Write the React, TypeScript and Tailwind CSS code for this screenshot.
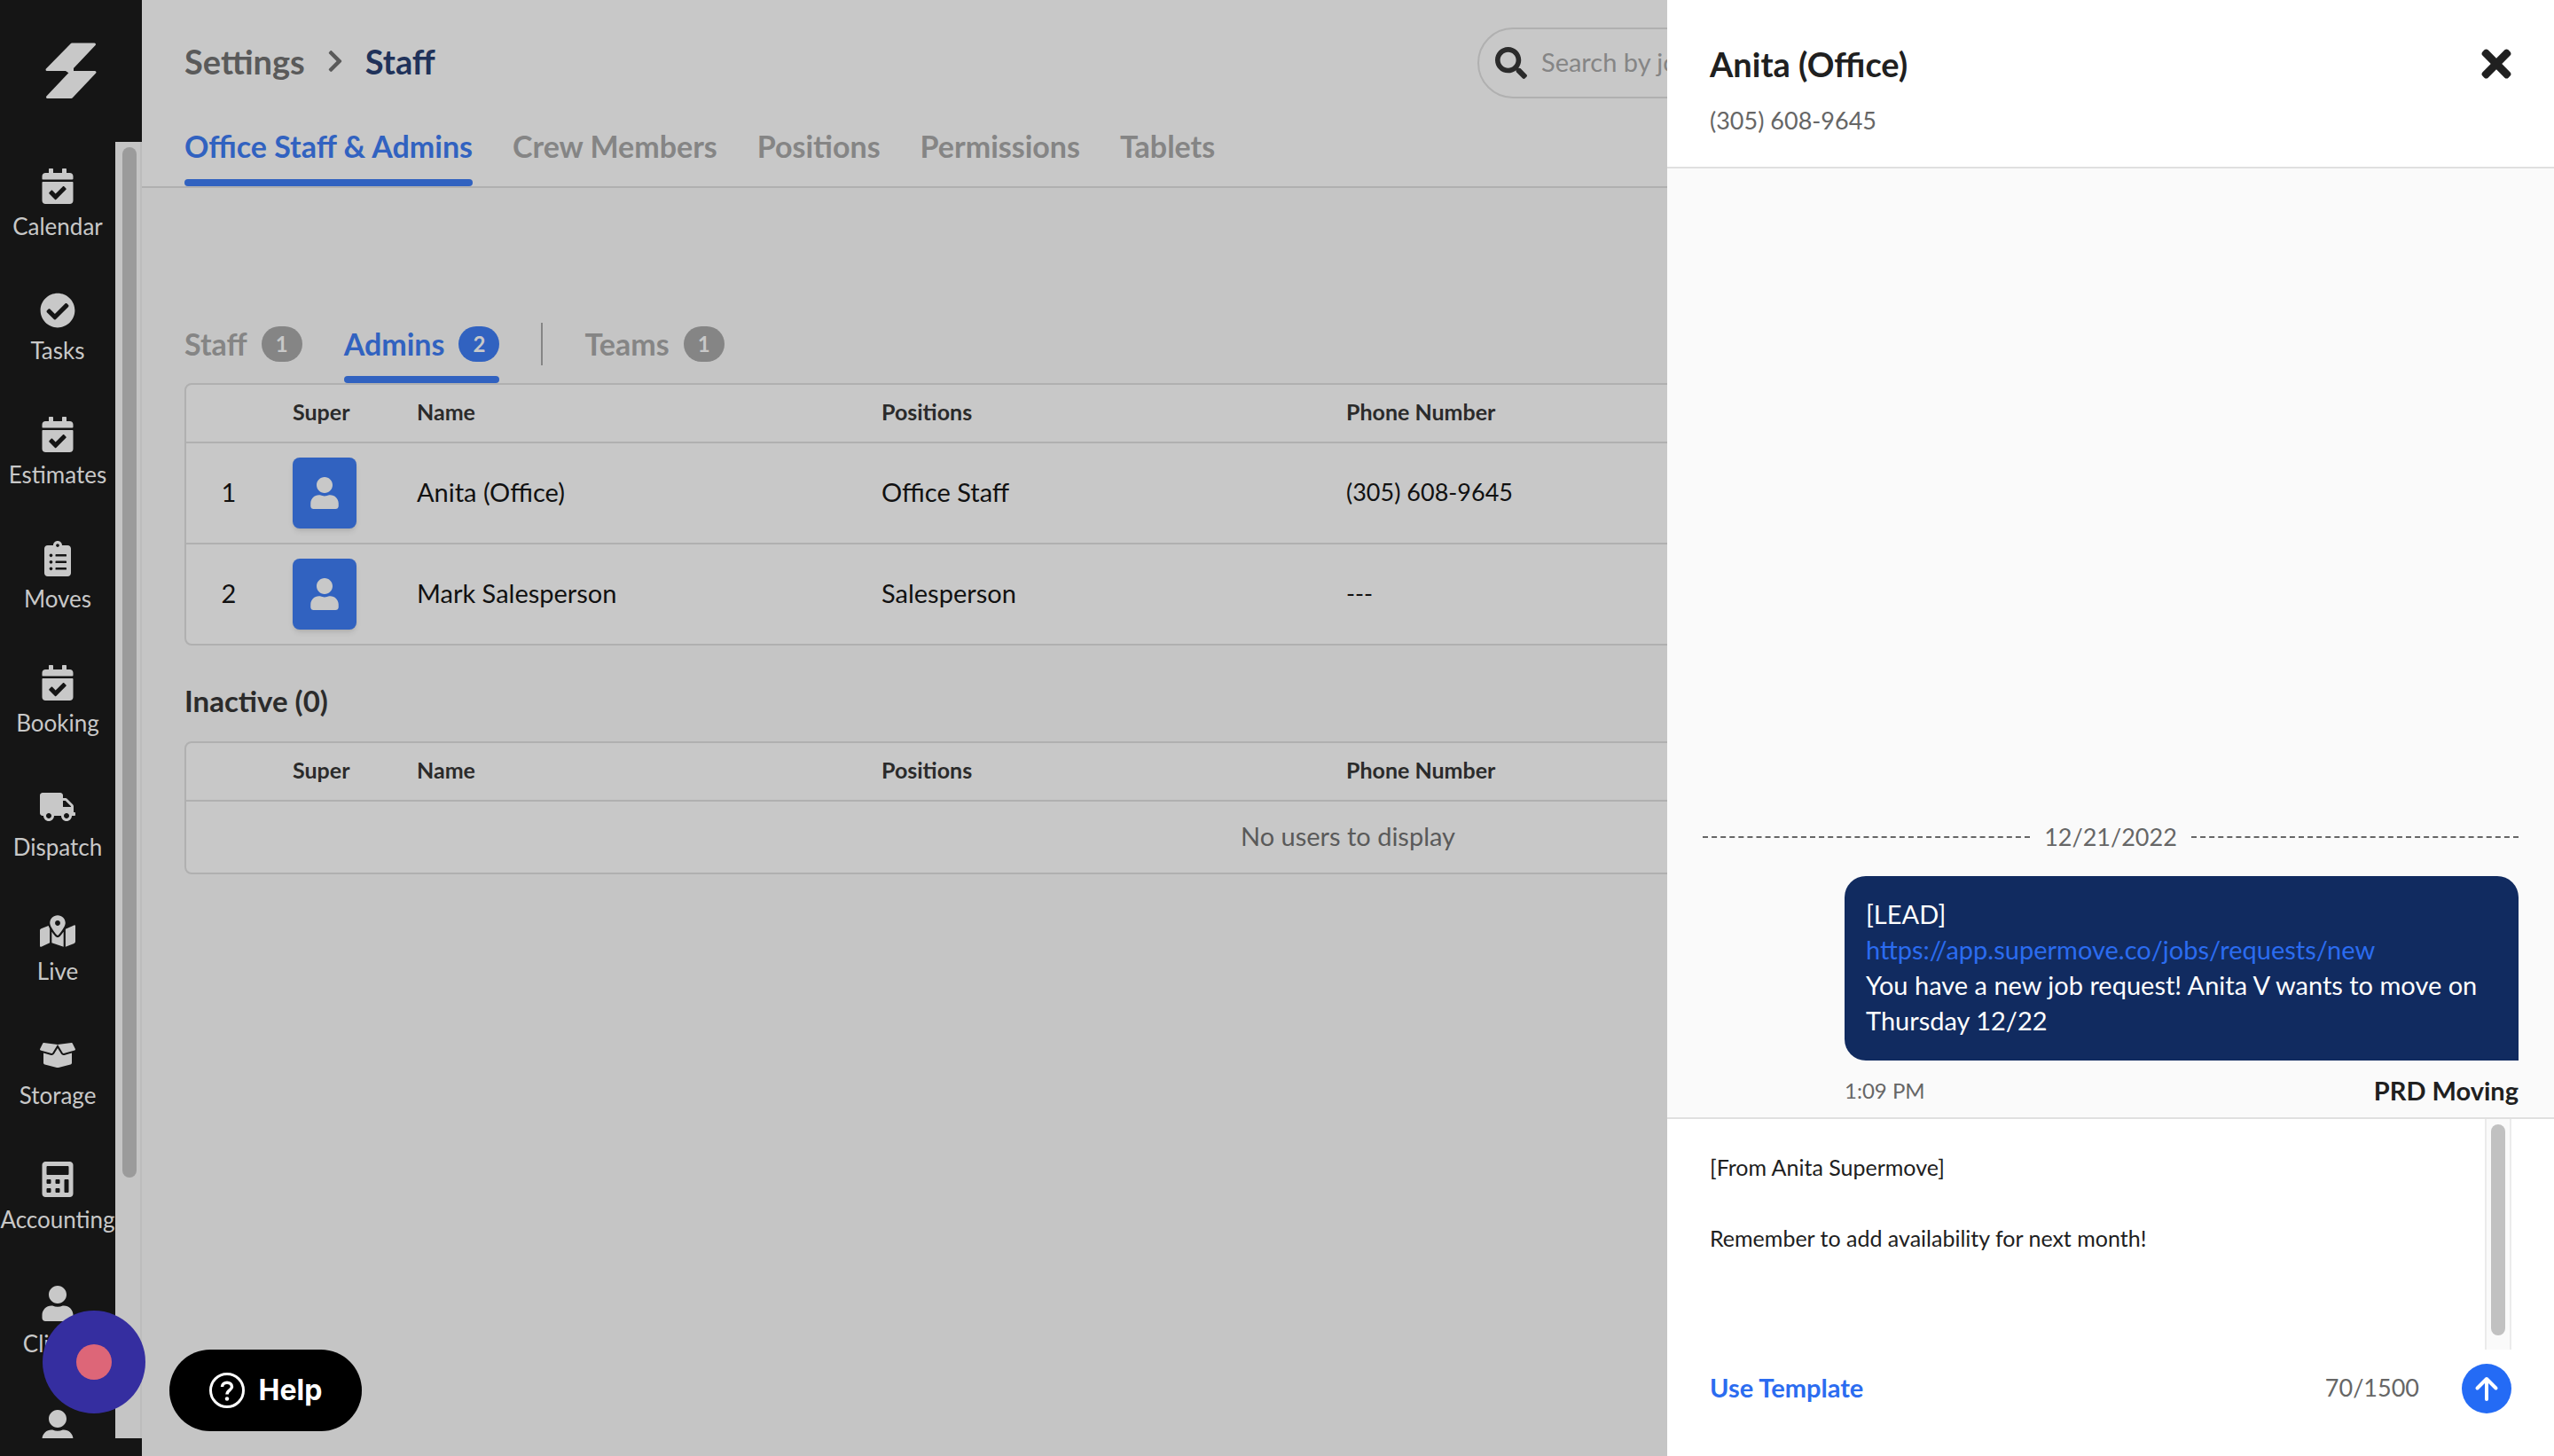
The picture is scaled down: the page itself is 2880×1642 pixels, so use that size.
import type { ReactNode } from "react";
import type { IconType } from "react-icons";
import {
  FaBoxOpen,
  FaCalculator,
  FaCalendarCheck,
  FaCheckCircle,
  FaChevronRight,
  FaClipboardList,
  FaMapMarkedAlt,
  FaSearch,
  FaTimes,
  FaTruck,
  FaUser,
} from "react-icons/fa";

type NavItem = { label: string; icon: IconType };

const navItems: NavItem[] = [
  { label: "Calendar", icon: FaCalendarCheck },
  { label: "Tasks", icon: FaCheckCircle },
  { label: "Estimates", icon: FaCalendarCheck },
  { label: "Moves", icon: FaClipboardList },
  { label: "Booking", icon: FaCalendarCheck },
  { label: "Dispatch", icon: FaTruck },
  { label: "Live", icon: FaMapMarkedAlt },
  { label: "Storage", icon: FaBoxOpen },
  { label: "Accounting", icon: FaCalculator },
  { label: "Clients", icon: FaUser },
];

// icons keep a 40px box, wide ones shrink in height instead
const iconSize = (icon: IconType) => {
  if (icon === FaTruck || icon === FaBoxOpen) return "w-10 h-8";
  if (icon === FaMapMarkedAlt) return "w-10 h-9";
  return "h-10 w-10";
};

const pageTabs = ["Crew Members", "Positions", "Permissions", "Tablets"];

const admins = [
  { name: "Anita (Office)", position: "Office Staff", phone: "(305) 608-9645" },
  { name: "Mark Salesperson", position: "Salesperson", phone: "---" },
];

function Logo() {
  return (
    <svg viewBox="0 0 60 66" className="h-[66px] w-[60px]" aria-label="Supermove">
      <g fill="#c8c8c8" stroke="#c8c8c8" strokeWidth="3" strokeLinejoin="round">
        <path d="M31 3H56.500L29.500 31.500H3Z" />
        <path d="M30 34.500H57L30.500 62.500H3.500Z" />
      </g>
      <path d="M24 33L33 27V39Z" fill="#c8c8c8" />
    </svg>
  );
}

function Sidebar() {
  return (
    <aside className="flex h-screen w-40 shrink-0 flex-col bg-[#151515] pb-5 text-[#c8c8c8]">
      <div className="flex h-40 shrink-0 items-center justify-center">
        <Logo />
      </div>
      <div className="flex min-h-0 flex-1">
        <nav className="w-[130px] overflow-hidden pt-[30px]">
          {navItems.map(({ label, icon: Icon }) => (
            <a key={label} href="#" className="flex h-[140px] flex-col items-center">
              <span className="flex h-10 items-center justify-center">
                <Icon className={iconSize(Icon)} />
              </span>
              <span className="mt-2 text-[26px] leading-[34px]">{label}</span>
            </a>
          ))}
          <a href="#" aria-label="Account" className="flex justify-center">
            <FaUser className="size-10" />
          </a>
        </nav>
        <div className="w-[30px] border-r-2 border-[#bcbcbc] bg-[#c5c5c5] pt-[6px] pl-2">
          <div className="h-[1162px] w-4 rounded-full bg-[#9b9b9b]" />
        </div>
      </div>
    </aside>
  );
}

function Badge({ active, children }: { active?: boolean; children: ReactNode }) {
  return (
    <span
      className={`flex h-10 w-[46px] items-center justify-center rounded-full text-2xl font-bold text-[#c8c8c8] ${
        active ? "bg-[#3162c0]" : "bg-[#858585]"
      }`}
    >
      {children}
    </span>
  );
}

function UserTable({ children }: { children: ReactNode }) {
  return (
    <div className="overflow-hidden rounded-lg border-2 border-[#b0b0b0] bg-[#c8c8c8]">
      <table className="w-full table-fixed border-collapse text-left text-[29px] text-[#111111]">
        <colgroup>
          <col className="w-24" />
          <col className="w-[140px]" />
          <col className="w-1/5" />
          <col className="w-1/5" />
          <col className="w-1/5" />
          <col />
        </colgroup>
        <thead>
          <tr className="h-[65px] text-[25px] text-[#2b2b2b]">
            <th></th>
            <th className="pb-[2px] pl-6 font-bold">Super</th>
            <th className="pb-[2px] pl-6 font-bold">Name</th>
            <th className="pb-[2px] pl-6 font-bold">Positions</th>
            <th className="pb-[2px] pl-6 font-bold">Phone Number</th>
            <th></th>
          </tr>
        </thead>
        <tbody>{children}</tbody>
      </table>
    </div>
  );
}

function Drawer() {
  return (
    <section className="fixed inset-y-0 right-0 flex w-[1000px] flex-col bg-white text-[#202020]">
      <header className="flex h-[190px] shrink-0 items-start justify-between border-b-2 border-[#e0e0e0] px-12 pt-12">
        <div>
          <h2 className="text-[38px] leading-[48px] font-bold">Anita (Office)</h2>
          <p className="mt-5 text-[27px] leading-10 text-[#666666]">(305) 608-9645</p>
        </div>
        <button aria-label="Close">
          <FaTimes className="h-12 w-[34px]" />
        </button>
      </header>

      <div className="flex min-h-0 flex-1 flex-col justify-end bg-[#fafafa] px-10">
        <div className="flex items-center gap-4 text-[27px] leading-10 text-[#666666]">
          <div className="flex-1 border-t-2 border-dashed border-[#666666]" />
          12/21/2022
          <div className="flex-1 border-t-2 border-dashed border-[#666666]" />
        </div>
        <div className="mt-6 ml-auto w-[760px]">
          <div className="rounded-3xl rounded-br-none bg-[#112b60] px-6 pt-[23px] pb-[25px] text-[29px] leading-10 text-white">
            <p>[LEAD]</p>
            <a href="#" className="text-[#2b6cf0]">
              https://app.supermove.co/jobs/requests/new
            </a>
            <p>You have a new job request! Anita V wants to move on Thursday 12/22</p>
          </div>
          <div className="mt-[14px] mb-[10px] flex items-center justify-between">
            <span className="text-2xl leading-10 text-[#666666]">1:09 PM</span>
            <span className="text-[29px] leading-10 font-bold">PRD Moving</span>
          </div>
        </div>
      </div>

      <footer className="h-[382px] shrink-0 border-t-2 border-[#e0e0e0] px-12">
        <div className="flex h-[260px]">
          <textarea
            aria-label="Message"
            className="flex-1 resize-none overflow-hidden pt-[34px] text-[25px] leading-10 outline-none"
            defaultValue={"[From Anita Supermove]\n\nRemember to add availability for next month!"}
          />
          <div className="w-[30px] border-x-2 border-[#ebebeb] bg-[#fafafa] px-[5px] pt-[6px]">
            <div className="h-[238px] w-4 rounded-full bg-[#c1c1c1]" />
          </div>
        </div>
        <div className="mt-4 flex items-center leading-10">
          <button className="pb-[2px] text-[29px] font-bold text-[#2b6cf0]">Use Template</button>
          <span className="mr-12 ml-auto pb-[2px] text-[27px] text-[#666666]">70/1500</span>
          <button
            aria-label="Send"
            className="flex size-14 items-center justify-center rounded-full bg-[#246bf5]"
          >
            <svg viewBox="0 0 28 28" className="size-7" fill="none" stroke="white" strokeWidth="4">
              <path d="M14 26V3M3.500 13.500L14 3L24.500 13.500" strokeLinecap="round" strokeLinejoin="round" />
            </svg>
          </button>
        </div>
      </footer>
    </section>
  );
}

export default function App() {
  return (
    <div className="flex h-screen overflow-hidden bg-[#c5c5c5] font-['Lato',sans-serif]">
      <Sidebar />

      <main className="min-w-0 flex-1">
        <header className="border-b-2 border-[#b0b0b0] bg-[#c8c8c8] px-12">
          <div className="flex h-[142px] items-center justify-between">
            <div className="flex items-center pb-1 text-[38px] font-bold">
              <a href="#" className="text-[#5a5a5a]">
                Settings
              </a>
              <FaChevronRight className="mx-6 h-7 w-5 text-[#5a5a5a]" />
              <span className="text-[#20325a]">Staff</span>
            </div>
            <label className="flex h-20 w-[1166px] items-center gap-4 rounded-full border-2 border-[#b0b0b0] px-[18px]">
              <FaSearch className="size-9 text-[#2b2b2b]" />
              <input
                aria-label="Search"
                placeholder="Search by job, name, phone, or email"
                className="flex-1 bg-transparent pb-[2px] text-[29px] outline-none placeholder:text-[#858585]"
              />
            </label>
          </div>
          <nav className="flex gap-[45px] text-[34px] leading-[46px] font-bold text-[#858585]">
            <a href="#" className="text-[#3162c0]">
              Office Staff &amp; Admins
              <span className="mt-[14px] block h-2 rounded-full bg-[#3162c0]" />
            </a>
            {pageTabs.map((tab) => (
              <a key={tab} href="#">
                {tab}
              </a>
            ))}
          </nav>
        </header>

        <div className="px-12 pt-[152px]">
          <div className="flex items-start gap-[47px] text-[34px] leading-[48px] font-bold text-[#858585]">
            <button className="flex items-center gap-4">
              Staff <Badge>1</Badge>
            </button>
            <button className="text-[#3162c0]">
              <span className="flex items-center gap-4">
                Admins <Badge active>2</Badge>
              </span>
              <span className="mt-3 block h-2 rounded-full bg-[#3162c0]" />
            </button>
            <div className="h-12 w-[2px] bg-[#858585]" />
            <button className="flex items-center gap-4">
              Teams <Badge>1</Badge>
            </button>
          </div>

          <UserTable>
            {admins.map((admin, i) => (
              <tr key={admin.name} className="h-[114px] border-t-2 border-[#b0b0b0] last:h-[113px]">
                <td className="pb-[2px] text-center">{i + 1}</td>
                <td className="pl-6">
                  <button
                    aria-label={`${admin.name} profile`}
                    className="flex h-20 w-[72px] items-center justify-center rounded-lg bg-[#3162c0] text-[#c8c8c8] shadow-md"
                  >
                    <FaUser className="h-9 w-8" />
                  </button>
                </td>
                <td className="pb-[2px] pl-6">{admin.name}</td>
                <td className="pb-[2px] pl-6">{admin.position}</td>
                <td className="pb-[2px] pl-6 text-[27px]">{admin.phone}</td>
                <td></td>
              </tr>
            ))}
          </UserTable>

          <h3 className="mt-[38px] mb-[22px] text-[33px] leading-[48px] font-bold text-[#2b2b2b]">
            Inactive (0)
          </h3>
          <UserTable>
            <tr className="h-[81px] border-t-2 border-[#b0b0b0]">
              <td colSpan={6} className="pb-[2px] text-center text-[#5a5a5a]">
                No users to display
              </td>
            </tr>
          </UserTable>
        </div>
      </main>

      <Drawer />

      <button
        aria-label="Record"
        className="fixed bottom-12 left-12 flex size-[116px] items-center justify-center rounded-full bg-[#352ea0]"
      >
        <span className="size-10 rounded-full bg-[#dd6678]" />
      </button>
      <button className="fixed bottom-7 left-[191px] flex h-[92px] w-[217px] items-center justify-center gap-4 rounded-full bg-black font-['Inter',sans-serif] text-[32px] font-bold text-white">
        <svg viewBox="0 0 40 40" className="size-10" fill="none" stroke="white">
          <circle cx="20" cy="20" r="18.500" strokeWidth="3" />
          <path d="M14.500 16C14.500 9.500 25.500 9.500 25.500 16C25.500 19.500 20 19.800 20 24.500" strokeWidth="3.500" />
          <circle cx="20" cy="29.500" r="2.200" fill="white" stroke="none" />
        </svg>
        Help
      </button>
    </div>
  );
}
